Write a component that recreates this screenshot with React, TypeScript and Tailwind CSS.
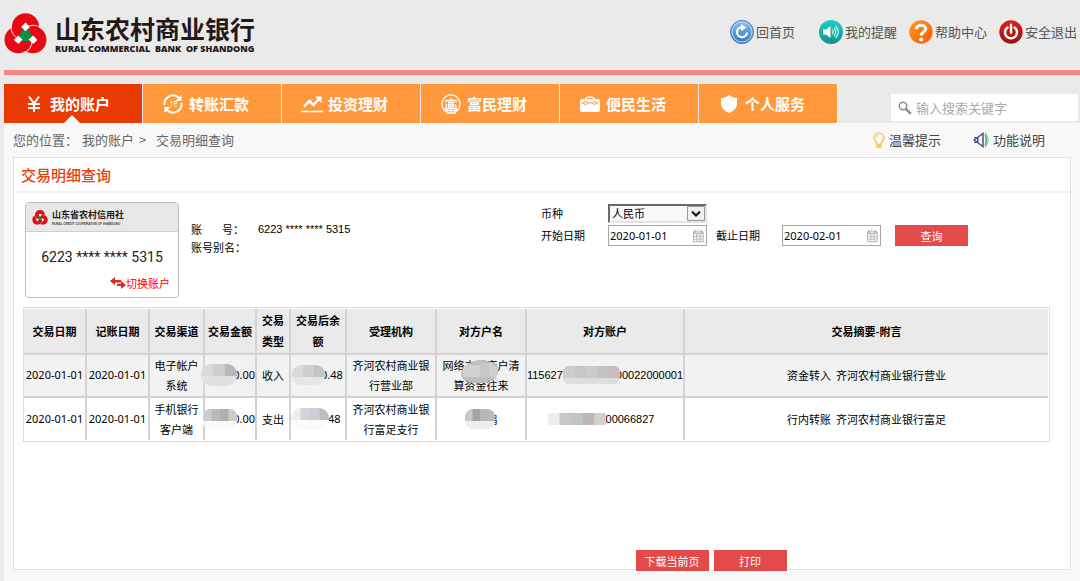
import type { ReactNode } from "react";

type Mask = { width: number; height: number; radius: number; tiles: string[]; base: string };

function BankMark({ className }: { className: string }) {
  return (
    <svg viewBox="0 0 128 124" className={className} aria-hidden="true">
      <g fill="#e60a14">
        <circle cx="64" cy="42" r="41" />
        <circle cx="41.5" cy="81" r="41" />
        <circle cx="86.5" cy="81" r="41" />
      </g>
      <g fill="none" stroke="#f6e4e4" strokeWidth="3">
        <path d="M20 44 A42 42 0 0 0 42 78" />
        <path d="M20 44 A42 42 0 0 0 42 78" transform="rotate(120 64 68)" />
        <path d="M20 44 A42 42 0 0 0 42 78" transform="rotate(240 64 68)" />
      </g>
      <path d="M58 48h12l17 25-8 12H49l-8-12z" fill="#0c9046" />
      <g fill="#fff">
        <path d="M64 29l13 13-13 13-13-13z" />
        <path d="M41 68l14 12-12 14-14-12z" />
        <path d="M87 68l13 14-13 12-13-14z" />
      </g>
    </svg>
  );
}

function HomeIcon() {
  return (
    <svg viewBox="0 0 24 24" className="h-6 w-6" aria-hidden="true">
      <defs>
        <linearGradient id="home" x1="0" y1="0" x2="0" y2="1">
          <stop offset="0" stopColor="#8fc4ea" />
          <stop offset="1" stopColor="#2e74bd" />
        </linearGradient>
      </defs>
      <circle cx="12" cy="12" r="11.5" fill="url(#home)" stroke="#4a82b8" />
      <circle cx="12" cy="12" r="10" fill="none" stroke="#b9dcf4" strokeWidth="1" />
      <path d="M12 7.2a5 5 0 1 0 5 5.4" fill="none" stroke="#fff" strokeWidth="2.2" />
      <path d="M11 4l5.5 3.4L11 11z" fill="#fff" />
    </svg>
  );
}

function RemindIcon() {
  return (
    <svg viewBox="0 0 24 24" className="h-6 w-6" aria-hidden="true">
      <defs>
        <linearGradient id="remind" x1="0" y1="0" x2="0" y2="1">
          <stop offset="0" stopColor="#1fd0c4" />
          <stop offset="1" stopColor="#12908c" />
        </linearGradient>
      </defs>
      <circle cx="12" cy="12" r="12" fill="url(#remind)" />
      <path d="M4 9.5h3L11.500 6v12L7 14.500H4z" fill="#fff" />
      <g fill="none" stroke="#d9fbf6" strokeWidth="1.200" strokeLinecap="round">
        <path d="M13.500 10.200q1.400 1.800 0 3.600" />
        <path d="M15.200 8.200q3 3.800 0 7.600" />
        <path d="M17 6.300q4.500 5.700 0 11.400" />
      </g>
    </svg>
  );
}

function HelpIcon() {
  return (
    <svg viewBox="0 0 24 24" className="h-6 w-6" aria-hidden="true">
      <defs>
        <linearGradient id="help" x1="0" y1="0" x2="1" y2="1">
          <stop offset="0" stopColor="#ff9d1c" />
          <stop offset="1" stopColor="#f8560a" />
        </linearGradient>
      </defs>
      <circle cx="12" cy="12" r="11.7" fill="url(#help)" />
      <path d="M7.300 9.200C7.600 3.800 17 4 16.700 9c-.2 3-4.500 3-4.500 6.500" fill="none" stroke="#fff" strokeWidth="3" />
      <circle cx="12.200" cy="19.500" r="2" fill="#fff" />
    </svg>
  );
}

function ExitIcon() {
  return (
    <svg viewBox="0 0 24 24" className="h-6 w-6" aria-hidden="true">
      <defs>
        <linearGradient id="exit" x1="0" y1="0" x2="0" y2="1">
          <stop offset="0" stopColor="#e22019" />
          <stop offset="1" stopColor="#971313" />
        </linearGradient>
      </defs>
      <circle cx="12" cy="12" r="11.7" fill="url(#exit)" />
      <path d="M8.500 7.500a6 6 0 1 0 7 0" fill="none" stroke="#fff" strokeWidth="2.400" strokeLinecap="round" />
      <path d="M12 4.800v8" stroke="#fff" strokeWidth="2.400" strokeLinecap="round" />
    </svg>
  );
}

function YuanIcon() {
  return (
    <svg viewBox="0 0 14 18" className="h-[18px] w-3.5" fill="none" stroke="#fff" strokeWidth="2" aria-hidden="true">
      <path d="M2 1.500l5 7 5-7M7 8.500V17M1 9h12M1 13h12" />
    </svg>
  );
}

function TransferIcon() {
  return (
    <svg viewBox="0 0 20 20" className="h-5 w-5" fill="none" stroke="#fff" aria-hidden="true">
      <path d="M1.500 11A8.500 8.500 0 0 1 16 4M18.500 9A8.500 8.500 0 0 1 4 16" strokeWidth="1.900" />
      <path d="M18.500 1v6h-6zM1.500 19v-6h6z" fill="#fff" stroke="none" />
      <path d="M7 8h2.500M8.200 7v6M11 7.500h2.500v2H11zM11.500 9.500c0 3 0 3 2.500 3" strokeWidth="1" strokeOpacity=".8" />
    </svg>
  );
}

function TrendIcon() {
  return (
    <svg viewBox="0 0 22 18" className="h-[18px] w-[22px]" fill="none" stroke="#fff" aria-hidden="true">
      <path d="M3 11.500l5.500-5.500 4 4L18 4" strokeWidth="2.500" />
      <path d="M14 1.500h6.500V8z" fill="#fff" stroke="none" />
      <path d="M0 16.500h22" strokeWidth="1.600" />
    </svg>
  );
}

function WealthIcon() {
  return (
    <svg viewBox="0 0 20 20" className="h-5 w-5" fill="none" stroke="#fff" aria-hidden="true">
      <path d="M6 18A9 9 0 1 1 14 18" strokeWidth="1.300" />
      <path d="M10 4v2M5 8.500V6.500h10v2M7 8.500h6M7.500 10.500h5v2h-5zM6 14.500h8V19H6zM10 14.500V19M6 16.700h8" strokeWidth="1.300" />
      <path d="M5.500 10L4.500 17M14.500 10l1 7" strokeWidth="1.300" />
    </svg>
  );
}

function CaseIcon() {
  return (
    <svg viewBox="0 0 20 18" className="h-[18px] w-5" aria-hidden="true">
      <path d="M5.500 4.500C6 1 14 1 14.500 4.500" fill="none" stroke="#fff" strokeWidth="1.500" />
      <path d="M2 4h16a2 2 0 0 1 2 2v9a2 2 0 0 1-2 2H2a2 2 0 0 1-2-2V6a2 2 0 0 1 2-2z" fill="#fff" />
      <path d="M1 8h3M7 8h6M16 8h3" stroke="#ff993c" strokeWidth="1" />
      <g fill="#fff" stroke="#ff993c">
        <circle cx="5.500" cy="8" r="1.600" />
        <circle cx="14.500" cy="8" r="1.600" />
      </g>
    </svg>
  );
}

function ShieldIcon() {
  return (
    <svg viewBox="0 0 16 18" className="h-[18px] w-4" fill="#fff" aria-hidden="true">
      <path d="M8 0c2 2 5 3 8 3v6c0 4.500-4 7-8 9-4-2-8-4.500-8-9V3c3 0 6-1 8-3z" />
    </svg>
  );
}

function SearchIcon() {
  return (
    <svg viewBox="0 0 14 14" className="h-3.5 w-3.5" fill="none" stroke="#8b8b8b" aria-hidden="true">
      <circle cx="5" cy="5" r="3.700" strokeWidth="1.500" />
      <path d="M7.800 7.800l5 5" strokeWidth="2.500" />
    </svg>
  );
}

function BulbIcon() {
  return (
    <svg viewBox="0 0 12 17" className="h-[17px] w-3" fill="none" stroke="#fccb5e" aria-hidden="true">
      <path d="M4 12.500C4 10 1.200 9 1.200 5.800a4.800 4.800 0 0 1 9.600 0C10.800 9 8 10 8 12.500z" strokeWidth="1.700" />
      <path d="M3.500 13.500h5M3.500 15h5" strokeWidth="1.800" />
      <path d="M6 3.200a2.500 2.500 0 0 0-2.300 2.500" strokeWidth="1" />
    </svg>
  );
}

function SpeakerIcon() {
  return (
    <svg viewBox="0 0 16 16" className="h-4 w-4" fill="none" aria-hidden="true">
      <path d="M4.500 5.500L10 1.500v13l-5.500-4L1 8z" stroke="#4d4a8c" strokeWidth="1.500" />
      <path d="M1 5.500h3.500v5H1M5 6v4" stroke="#4d4a8c" strokeWidth="1" />
      <path d="M12.500 1.500q1.500 6.500 0 13" stroke="#4aba78" strokeWidth="1.700" />
      <path d="M14.500 3.500q1 4.500 0 9" stroke="#7cc99a" strokeWidth="1" />
    </svg>
  );
}

function SwapIcon() {
  return (
    <svg viewBox="0 0 16 12" className="h-3 w-4" fill="#e3251f" aria-hidden="true">
      <path d="M0 4l5-4v3h6v2.500H5V8z" />
      <path d="M16 8l-5-4v2.700H7V9h4v3z" />
    </svg>
  );
}

function CalendarIcon() {
  return (
    <svg viewBox="0 0 12 15" className="h-[15px] w-3" aria-hidden="true">
      <path d="M.500 3.500h11v11H.500z" fill="#fff" stroke="#a9a9a9" />
      <path d="M2 1.500v3M9.500 1.500v3" stroke="#999" strokeWidth="1.500" />
      <path d="M5.500 0v3" stroke="#bbb" />
      <path d="M1 5.500h10M1 8.500h10M1 11.500h10M4.200 5v9M7.800 5v9" stroke="#b0b0b0" />
    </svg>
  );
}

const shortcuts: { label: string; icon: ReactNode; className: string }[] = [
  { label: "回首页", icon: <HomeIcon />, className: "mr-6" },
  { label: "我的提醒", icon: <RemindIcon />, className: "mr-3" },
  { label: "帮助中心", icon: <HelpIcon />, className: "mr-3" },
  { label: "安全退出", icon: <ExitIcon />, className: "" },
];

const tabs: { label: string; icon: ReactNode }[] = [
  { label: "我的账户", icon: <YuanIcon /> },
  { label: "转账汇款", icon: <TransferIcon /> },
  { label: "投资理财", icon: <TrendIcon /> },
  { label: "富民理财", icon: <WealthIcon /> },
  { label: "便民生活", icon: <CaseIcon /> },
  { label: "个人服务", icon: <ShieldIcon /> },
];

const columns = [
  { label: "交易日期", className: "w-[62px]" },
  { label: "记账日期", className: "w-[63px]" },
  { label: "交易渠道", className: "w-[55px]" },
  { label: "交易金额", className: "w-[52px]" },
  { label: "交易类型", className: "w-[34px] px-1" },
  { label: "交易后余额", className: "w-14 px-1" },
  { label: "受理机构", className: "w-[90px]" },
  { label: "对方户名", className: "w-[90px]" },
  { label: "对方账户", className: "w-[158px]" },
  { label: "交易摘要-附言", className: "" },
];

const masks: Record<string, Mask> = {
  amount1: { width: 36, height: 22, radius: 10, base: "#e2e2e2", tiles: ["#d9d9d8", "#cecece", "#b9b7bb"] },
  balance1: { width: 33, height: 20, radius: 9, base: "#e6e6e6", tiles: ["#dadada", "#cfcfcf", "#c6c4c2"] },
  account1: { width: 57, height: 18, radius: 6, base: "#dfdede", tiles: ["#cdcbcc", "#c6c6c7", "#cbcaca", "#c4c0c3", "#c6bcbb"] },
  amount2: { width: 34, height: 20, radius: 7, base: "#fafafa", tiles: ["#cdcbcb", "#bbb9bc", "#b1aeb4", "#ccccc6"] },
  balance2: { width: 38, height: 22, radius: 10, base: "#fafafa", tiles: ["#f1eeea", "#d5d2e0", "#cfcdd3", "#bdbdc0"] },
  name2: { width: 30, height: 20, radius: 8, base: "#eeeeee", tiles: ["#c8c8c8", "#a4a4a4", "#b6b6b6", "#b9b9b9"] },
  account2: { width: 58, height: 12, radius: 2, base: "#e0e0e0", tiles: ["#eeecec", "#c8c5c7", "#bfc5c8", "#bfb6ba", "#d1d0c9"] },
};

function Mosaic({ name, className }: { name: string; className: string }) {
  const { width, height, radius, base, tiles } = masks[name];
  const step = width / tiles.length;
  return (
    <svg width={width} height={height} className={`relative shrink-0 ${className}`} aria-hidden="true">
      <clipPath id={name}>
        <rect width={width} height={height} rx={radius} />
      </clipPath>
      <g clipPath={`url(#${name})`}>
        <rect width={width} height={height} fill={base} />
        {tiles.map((fill, index) => (
          <rect key={index} x={index * step} width={step + 0.5} height="12" fill={fill} />
        ))}
      </g>
    </svg>
  );
}

function DateField({ id, value }: { id: string; value: string }) {
  return (
    <div className="flex h-[21px] w-[99px] items-center border border-[#a5a5a5] bg-white pr-0.5">
      <input
        id={id}
        type="text"
        defaultValue={value}
        className="w-full min-w-0 pl-px font-['Noto_Sans',sans-serif] text-[11px] outline-none"
      />
      <CalendarIcon />
    </div>
  );
}

function Cell({ className = "", children }: { className?: string; children: ReactNode }) {
  return <td className={`border-2 border-[#d4d2d2] pb-px ${className}`}>{children}</td>;
}

export default function App() {
  return (
    <div className="flex min-h-screen flex-col bg-[#eaeaea] pl-1 font-['Noto_Sans_CJK_SC',sans-serif] text-[11px] leading-4 text-black">
      <header>
        <div className="flex h-[70px] items-start justify-between pr-[3px]">
          <div className="flex items-center gap-2 pt-3">
            <BankMark className="h-[41px] w-[43px]" />
            <div className="text-[#231815]">
              <div className="text-[25px] font-bold leading-8">山东农村商业银行</div>
              <div className="whitespace-pre font-['Open_Sans',sans-serif] text-[9px] font-extrabold leading-2.5">
                RURAL COMMERCIAL  BANK  OF SHANDONG
              </div>
            </div>
          </div>
          <nav className="flex pt-5">
            {shortcuts.map((item) => (
              <a key={item.label} href="#" className={`flex items-center gap-0.5 text-[13px] text-[#555] ${item.className}`}>
                {item.icon}
                {item.label}
              </a>
            ))}
          </nav>
        </div>
        <div className="h-[5px] bg-[#f88585]" />
        <div className="flex items-end justify-between pt-[9px]">
          <nav className="flex gap-px">
            {tabs.map((tab, index) => (
              <a
                key={tab.label}
                href="#"
                className={`relative flex h-[39px] w-[138px] items-center text-[15px] font-bold text-white ${
                  index === 0 ? "bg-[#e83a05]" : "bg-[#ff993c]"
                }`}
              >
                <span className="ml-[18px] flex w-6 justify-center">{tab.icon}</span>
                <span className="ml-1">{tab.label}</span>
                {index === 0 && (
                  <svg viewBox="0 0 16 8" className="absolute bottom-0 left-[60px] h-2 w-4" fill="#f8f8f8" aria-hidden="true">
                    <path d="M0 8l8-8 8 8z" />
                  </svg>
                )}
              </a>
            ))}
          </nav>
          <label className="mb-0.5 mr-0.5 flex h-[27px] w-[187px] items-center gap-1 bg-white pl-[7px]">
            <SearchIcon />
            <input
              type="text"
              aria-label="搜索"
              placeholder="输入搜索关键字"
              className="min-w-0 flex-1 text-[13px] outline-none placeholder:text-[#aaa]"
            />
          </label>
        </div>
      </header>

      <main className="flex-1 bg-[#f8f8f8] px-[9px] pb-2.5">
        <div className="flex h-[34px] items-center justify-between pr-[26px] text-[13px] text-[#666]">
          <div className="flex items-center">
            <span>您的位置：</span>
            <a href="#" className="ml-1">我的账户</a>
            <span className="mx-[5px] w-3">&gt;</span>
            <span>交易明细查询</span>
          </div>
          <div className="flex gap-8 text-[#444]">
            <a href="#" className="flex items-center gap-1">
              <BulbIcon />
              温馨提示
            </a>
            <a href="#" className="flex items-center gap-1">
              <SpeakerIcon />
              功能说明
            </a>
          </div>
        </div>

        <section className="border border-[#e2e2e2] bg-white">
          <h1 className="flex h-[35px] items-center border-b-2 border-[#efefef] pl-[7px] text-[15px] font-medium text-[#e8400c]">
            交易明细查询
          </h1>

          <div className="flex px-[11px] pt-[9px]">
            <div className="h-24 w-[154px] shrink-0 overflow-hidden rounded-sm border border-[#bdbdbd] bg-white">
              <div className="flex h-[29px] items-center gap-1 border-b border-[#cfcfcf] bg-[#e8e8e8] pl-1.5">
                <BankMark className="h-[15px] w-4" />
                <div>
                  <div className="text-[9px] font-bold leading-3.5 text-[#231815]">山东省农村信用社</div>
                  <div className="whitespace-nowrap font-['Liberation_Sans',sans-serif] text-[3px] font-bold leading-1 text-[#444]">
                    RURAL CREDIT COOPERATIVE OF SHANDONG
                  </div>
                </div>
              </div>
              <div className="pt-[15px] text-center font-['Roboto',sans-serif] text-sm text-[#222]">6223 **** **** 5315</div>
              <a href="#" className="mt-2 flex items-center justify-end pr-2 text-[#f00]">
                <SwapIcon />
                切换账户
              </a>
            </div>

            <dl className="ml-3 mt-[18px] grid h-9 w-[350px] shrink-0 grid-cols-[67px_1fr] leading-[18px]">
              <dt className="flex">
                <span>账</span>
                <span className="ml-5">号：</span>
              </dt>
              <dd className="font-['Liberation_Sans',sans-serif]">6223 **** **** 5315</dd>
              <dt>账号别名：</dt>
              <dd />
            </dl>

            <form className="grid grid-cols-[67px_auto_auto_auto_auto] items-center gap-y-0.5 self-start pt-0.5">
              <label htmlFor="currency" className="pb-0.5">币种</label>
              <div className="relative col-span-4 w-[99px]">
                <select
                  id="currency"
                  className="block h-[19px] w-[99px] appearance-none border-2 border-[#e3e3e3] border-l-[#696969] border-t-[#696969] bg-[#f8f8f8] pl-0.5 text-[11px] leading-[15px]"
                >
                  <option>人民币</option>
                </select>
                <svg viewBox="0 0 18 15" className="pointer-events-none absolute right-0.5 top-0.5 h-[15px] w-[18px]" aria-hidden="true">
                  <path d="M.500.500h17v14H.500z" fill="#f0f0f0" stroke="#999" />
                  <path d="M5 5.500l4 4 4-4" fill="none" stroke="#111" strokeWidth="2" />
                </svg>
              </div>
              <label htmlFor="from" className="pb-0.5">开始日期</label>
              <DateField id="from" value="2020-01-01" />
              <label htmlFor="to" className="ml-[9px] w-[66px] pb-0.5">截止日期</label>
              <DateField id="to" value="2020-02-01" />
              <button type="button" className="ml-3.5 h-[21px] w-[73px] bg-[#e34a4a] text-white">
                查询
              </button>
            </form>
          </div>

          <div className="ml-[9px] mr-5 mt-[9px] border border-[#dedede] py-px pr-px">
            <table className="w-full table-fixed border-collapse border-hidden text-center">
              <thead>
                <tr className="h-[45px] bg-[#eaeaea] leading-[21px]">
                  {columns.map((column) => (
                    <th key={column.label} className={`border-2 border-[#d4d2d2] font-bold ${column.className}`}>
                      {column.label}
                    </th>
                  ))}
                </tr>
              </thead>
              <tbody className="leading-5">
                <tr className="h-[43px] bg-[#f2f2f2]">
                  <Cell className="font-['Noto_Sans',sans-serif]">2020-01-01</Cell>
                  <Cell className="font-['Noto_Sans',sans-serif]">2020-01-01</Cell>
                  <Cell className="px-1">电子帐户系统</Cell>
                  <Cell className="font-['Noto_Sans',sans-serif]">
                    <div className="flex items-center justify-end">
                      <Mosaic name="amount1" className="z-10 -ml-2 -mr-1" />
                      0.00
                    </div>
                  </Cell>
                  <Cell>收入</Cell>
                  <Cell className="font-['Noto_Sans',sans-serif]">
                    <div className="flex items-center pl-px">
                      <Mosaic name="balance1" className="z-10 -mr-1" />
                      0.48
                    </div>
                  </Cell>
                  <Cell className="px-1">齐河农村商业银行营业部</Cell>
                  <Cell className="px-1">
                    <div className="relative">
                      网络支付商户清算资金往来
                      <svg viewBox="0 0 38 26" className="absolute left-5 top-1 h-[26px] w-[38px]" aria-hidden="true">
                        <path d="M10 3Q19-1 30 3Q38 5 37 12Q37 19 30 22Q20 26 8 23Q0 21 0 15Q0 8 10 3z" fill="#bebebe" />
                        <path d="M5 6h14v12H2V9zM19 4h11l6 5v9H19z" fill="#d0d0d0" />
                        <path d="M19 4h9v14h-9z" fill="#c6c6c8" />
                      </svg>
                    </div>
                  </Cell>
                  <Cell className="font-['Liberation_Sans',sans-serif]">
                    <div className="flex items-center justify-center">
                      115627
                      <Mosaic name="account1" className="z-10 -mr-1" />
                      00022000001
                    </div>
                  </Cell>
                  <Cell className="whitespace-pre">资金转入  齐河农村商业银行营业</Cell>
                </tr>
                <tr className="h-[43px] bg-white">
                  <Cell className="font-['Noto_Sans',sans-serif]">2020-01-01</Cell>
                  <Cell className="font-['Noto_Sans',sans-serif]">2020-01-01</Cell>
                  <Cell className="px-1">手机银行客户端</Cell>
                  <Cell className="font-['Noto_Sans',sans-serif]">
                    <div className="flex items-center justify-end">
                      <Mosaic name="amount2" className="z-10 -ml-2 -mr-1" />
                      0.00
                    </div>
                  </Cell>
                  <Cell>支出</Cell>
                  <Cell className="font-['Noto_Sans',sans-serif]">
                    <div className="flex items-center">
                      <Mosaic name="balance2" className="z-10 -mr-px" />
                      48
                    </div>
                  </Cell>
                  <Cell className="px-1">齐河农村商业银行富足支行</Cell>
                  <Cell>
                    <div className="flex items-center justify-center">
                      <Mosaic name="name2" className="z-10 -mr-2" />
                      鹏
                    </div>
                  </Cell>
                  <Cell className="font-['Liberation_Sans',sans-serif]">
                    <div className="flex items-center justify-center pr-2">
                      <Mosaic name="account2" className="z-10" />
                      00066827
                    </div>
                  </Cell>
                  <Cell className="whitespace-pre">行内转账  齐河农村商业银行富足</Cell>
                </tr>
              </tbody>
            </table>
          </div>

          <div className="-mb-0.5 flex justify-center gap-[5px] pl-[338px] pt-[108px]">
            <button type="button" className="h-[21px] w-[73px] bg-[#e34a4a] text-white">
              下载当前页
            </button>
            <button type="button" className="h-[21px] w-[73px] bg-[#e34a4a] text-white">
              打印
            </button>
          </div>
        </section>
      </main>
    </div>
  );
}
